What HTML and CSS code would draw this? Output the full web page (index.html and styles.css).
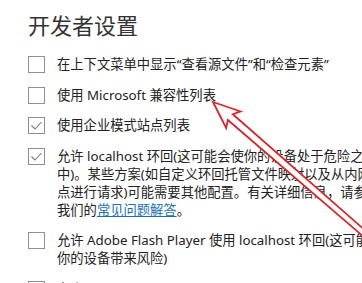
FILE: index.html
```html
<!DOCTYPE html>
<html lang="zh-CN">
<head>
    <meta charset="UTF-8">
    <meta name="viewport" content="width=device-width, initial-scale=1.0">
    <title>开发者设置</title>
    <link rel="stylesheet" href="styles.css">
</head>
<body>
    <div class="page">
        <h1 class="title">开发者设置</h1>

        <div class="option">
            <span class="box"></span>
            <p class="label">在上下文菜单中显示“查看源文件”和“检查元素”</p>
        </div>

        <div class="option">
            <span class="box"></span>
            <p class="label">使用 Microsoft 兼容性列表</p>
        </div>

        <div class="option">
            <span class="box checked">
                <svg viewBox="0 0 17 17" width="17" height="17"><path d="M3.5 8.5 L7 12 L13.5 5" fill="none" stroke="#7a7a7a" stroke-width="1.1"/></svg>
            </span>
            <p class="label">使用企业模式站点列表</p>
        </div>

        <div class="option">
            <span class="box checked">
                <svg viewBox="0 0 17 17" width="17" height="17"><path d="M3.5 8.5 L7 12 L13.5 5" fill="none" stroke="#7a7a7a" stroke-width="1.1"/></svg>
            </span>
            <p class="label">允许 localhost 环回(这可能会使你的设备处于危险之<br>中)。某些方案(如自定义环回托管文件映射以及从内网站<br>点进行请求)可能需要其他配置。有关详细信息，请参阅<br>我们的<a href="#" class="link">常见问题解答</a>。</p>
        </div>

        <div class="option">
            <span class="box"></span>
            <p class="label">允许 Adobe Flash Player 使用 localhost 环回(这可能会给<br>你的设备带来风险)</p>
        </div>

        <div class="option">
            <span class="box"></span>
            <p class="label">允许 Adobe Flash Player</p>
        </div>
    </div>

    <!-- 红色箭头 -->
    <svg class="arrow" width="362" height="283" viewBox="0 0 362 283">
        <g transform="translate(213,102) rotate(41)">
            <polygon points="0,0 27,-11 23,-3.8 300,-2.4 300,2.4 23,3.8 27,11"
                     fill="#fff" stroke="#d8262c" stroke-width="1.8" stroke-linejoin="miter"/>
        </g>
    </svg>
</body>
</html>
```

FILE: styles.css
```css
body {
    margin: 0;
    background-color: #fff;
    overflow: hidden;
    font-family: "Noto Sans", "Noto Sans CJK SC", sans-serif;
}

.page {
    padding: 11px 0 0 28px;
    white-space: nowrap;
}

.title {
    margin: 0 0 18px;
    font-size: 22px;
    line-height: 26px;
    font-weight: normal;
    color: #333;
    font-family: "Noto Sans CJK SC", sans-serif;
}

.option {
    display: flex;
    align-items: flex-start;
    gap: 12px;
    margin-bottom: 12.5px;
}

.box {
    flex: none;
    width: 15px;
    height: 15px;
    margin-top: 1px;
    border: 1px solid #8f8f8f;
    position: relative;
}

.box svg {
    position: absolute;
    left: -1px;
    top: -1px;
}

.label {
    margin: 0;
    font-size: 13.3px;
    line-height: 18px;
    color: #222;
}

.link {
    color: #1a6fb8;
    text-decoration: underline;
}

.arrow {
    position: absolute;
    left: 0;
    top: 0;
    pointer-events: none;
}
```
